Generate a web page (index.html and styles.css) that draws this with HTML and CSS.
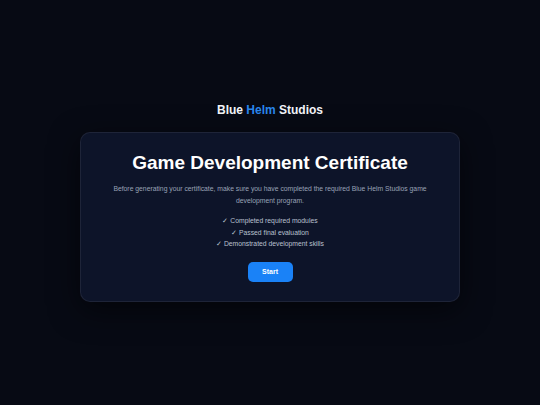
FILE: index.html
```html
<!DOCTYPE html>
<html lang="en">
<head>
<meta charset="utf-8">
<title>Blue Helm Studios – Certificate</title>
<link rel="stylesheet" href="styles.css">
</head>
<body>
<main class="page">
  <div class="brand">Blue <span class="brand-accent">Helm</span> Studios</div>
  <section class="card">
    <h1 class="title">Game Development Certificate</h1>
    <p class="intro">Before generating your certificate, make sure you have completed the required Blue Helm Studios game development program.</p>
    <ul class="checklist">
      <li>✓ Completed required modules</li>
      <li>✓ Passed final evaluation</li>
      <li>✓ Demonstrated development skills</li>
    </ul>
    <button class="start-btn" type="button">Start</button>
  </section>
</main>
</body>
</html>
```
FILE: styles.css
```css
* { box-sizing: border-box; }
html, body { margin: 0; padding: 0; }
body {
  background: #070a14;
  font-family: "Liberation Sans", Arial, sans-serif;
  color: #ffffff;
}
.page {
  min-height: 405px;
  display: flex;
  flex-direction: column;
  align-items: center;
  justify-content: center;
  gap: 15px;
}
.brand {
  font-size: 12px;
  font-weight: 700;
  color: #f3f5fa;
  line-height: 14px;
}
.brand-accent { color: #2a87ee; }
.card {
  width: 380px;
  background: #0d1429;
  border: 1px solid rgba(255,255,255,0.07);
  border-radius: 10px;
  box-shadow: 0 8px 30px rgba(0,0,0,0.55);
  padding: 18px 24px 19px;
  display: flex;
  flex-direction: column;
  align-items: center;
  text-align: center;
}
.title {
  margin: 0;
  font-size: 19px;
  line-height: 23px;
  font-weight: 700;
  color: #ffffff;
}
.intro {
  margin: 9px 0 0;
  font-size: 6.8px;
  line-height: 12px;
  color: #99a2b6;
}
.checklist {
  list-style: none;
  margin: 8px 0 0;
  padding: 0;
  font-size: 6.8px;
  line-height: 11.5px;
  color: #b9c0cf;
}
.start-btn {
  margin-top: 12px;
  width: 45px;
  height: 20px;
  border: none;
  border-radius: 5px;
  background: #1a82f7;
  color: #ffffff;
  font-family: inherit;
  font-size: 7px;
  font-weight: 700;
  padding: 0;
}
```
